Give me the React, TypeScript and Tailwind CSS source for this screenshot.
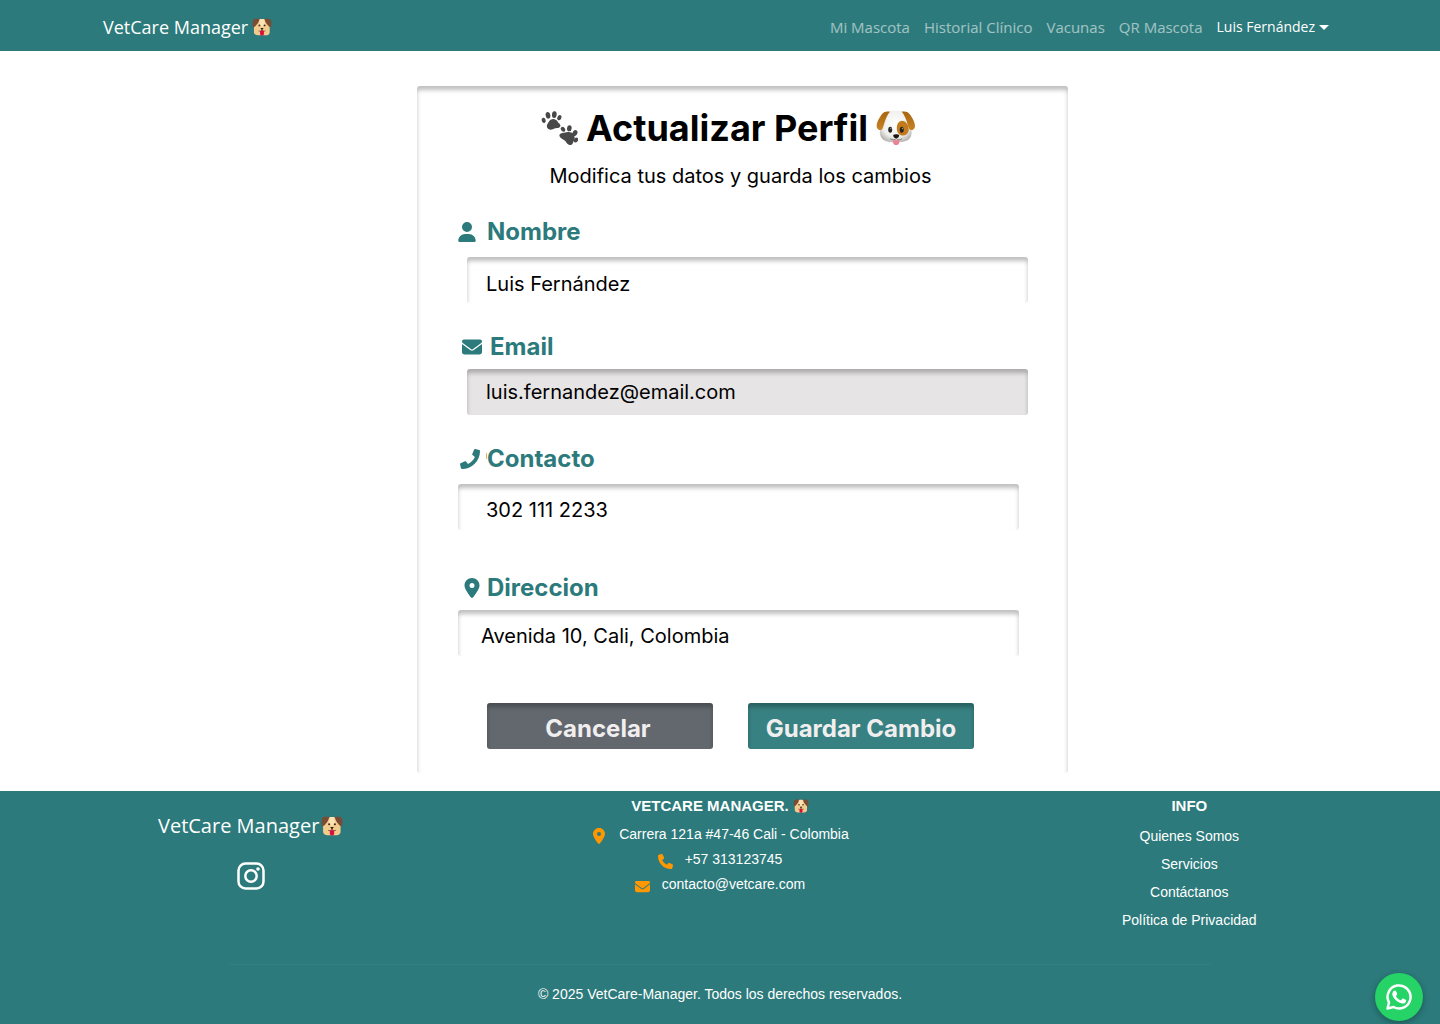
import React from "react";
import { FaUser, FaEnvelope, FaLocationDot, FaPhone } from "react-icons/fa6";
import { FaPhone as FaHandset } from "react-icons/fa";

function PuppyMark({ className }: { className: string }) {
  return (
    <svg viewBox="0 0 60 56" className={className} aria-hidden="true">
      <path d="M12 4h36l6 20v20c0 6-5 10-11 10H17C11 54 5 50 5 44V24z" fill="#f3cb8c" />
      <path d="M24 3h12l3 18-9 8-9-8z" fill="#fbe3b4" />
      <path d="M22 2H10C5 2 2 6 1 11v13c0 4 5 6 8 2 5-7 12-12 13-24z" fill="#7a4b35" />
      <path d="M38 2h12c5 0 8 4 9 9v13c0 4-5 6-8 2-5-7-12-12-13-24z" fill="#7a4b35" />
      <circle cx="22" cy="23" r="3" fill="#3b2a25" />
      <circle cx="38" cy="23" r="3" fill="#3b2a25" />
      <path d="M25 31h10l-4 6v4h-2v-4z" fill="#33221f" />
      <path d="M19 40c4 2 8 1 11-2 3 3 7 4 11 2" fill="none" stroke="#5a3a2c" strokeWidth="2" />
      <path d="M24 40h12v9a6 6 0 0 1-12 0z" fill="#d8103f" />
    </svg>
  );
}

function DogFace() {
  return (
    <svg viewBox="1034 92 121 107" className="h-9 w-10 shrink-0" aria-hidden="true">
      <defs>
        <radialGradient id="fur" cx="0.5" cy="0.4" r="0.62">
          <stop offset="0" stopColor="#ffffff" />
          <stop offset="0.7" stopColor="#eeeeec" />
          <stop offset="1" stopColor="#b9b6b2" />
        </radialGradient>
        <linearGradient id="ear" x1="0" y1="0" x2="0" y2="1">
          <stop offset="0" stopColor="#a8640f" />
          <stop offset="1" stopColor="#c98424" />
        </linearGradient>
      </defs>
      <path d="M1064 98c14-6 46-6 60 0 10 10 13 26 15 42 4 14 5 30-6 40-14 12-64 12-78 0-11-10-10-26-6-40 2-16 5-32 15-42z" fill="url(#fur)" />
      <path d="M1076 96c-12-2-20 1-26 10-6 9-14 22-14 34 0 9 9 14 15 11 8-8 7-32 25-55z" fill="url(#ear)" />
      <path d="M1112 96c12-2 20 1 26 10 6 9 14 22 14 34 0 9-9 14-15 11-8-8-7-32-25-55z" fill="url(#ear)" />
      <path d="M1110 124c12-1 22 10 23 24 1 12-7 20-17 20-12 0-19-8-19-22 0-12 5-21 13-22z" fill="#c17a1c" />
      <ellipse cx="1077" cy="151" rx="6" ry="9" fill="#282321" />
      <ellipse cx="1112" cy="151" rx="6" ry="9" fill="#282321" />
      <circle cx="1079" cy="147" r="2" fill="#999" />
      <circle cx="1114" cy="147" r="2" fill="#999" />
      <path d="M1086 167c4-3 14-3 18 0 1 6-5 10-9 10s-10-4-9-10z" fill="#171413" />
      <path d="M1077 178c7 5 14 4 18-1 4 5 11 6 18 1" fill="none" stroke="#55504d" strokeWidth="2" />
      <path d="M1086 182c6 1 12 1 18 0v7c0 11-18 11-18 0z" fill="#ee7f93" />
    </svg>
  );
}

function Paws() {
  return (
    <svg viewBox="34 84 111 105" className="h-[35px] w-[37px] shrink-0" fill="#484848" aria-hidden="true">
      <path d="M52 133c-2-7 2-11 5-16 4-8 14-11 21-7 6 3 6 7 10 11 7 6 5 13-3 14-6 0-9 0-14 3-7 4-16 3-19-5z" />
      <ellipse cx="42" cy="112" rx="6" ry="8" transform="rotate(-15 42 112)" />
      <ellipse cx="55" cy="97" rx="7" ry="10" transform="rotate(-10 55 97)" />
      <ellipse cx="74" cy="95" rx="7" ry="10" transform="rotate(5 74 95)" />
      <ellipse cx="89" cy="104" rx="6" ry="8" transform="rotate(30 89 104)" />
      <path d="M91 162c-4-6 0-11 7-12 7 0 10-3 17-3 13-1 21 8 20 19 0 6-4 8-5 13-2 8-11 9-16 4-5-4-5-8-10-11-5-4-10-5-13-10z" />
      <ellipse cx="100" cy="139" rx="6" ry="8" transform="rotate(-40 100 139)" />
      <ellipse cx="119" cy="136" rx="7" ry="9" transform="rotate(5 119 136)" />
      <ellipse cx="136" cy="150" rx="7" ry="9" transform="rotate(25 136 150)" />
      <ellipse cx="139" cy="171" rx="6" ry="8" transform="rotate(40 139 171)" />
    </svg>
  );
}

function WhatsAppGlyph() {
  return (
    <svg viewBox="0 0 28 28" className="size-7" aria-hidden="true">
      <path
        d="M4 19.500A11.500 11.500 0 1 1 8.500 24L2.500 25.500z"
        fill="none"
        stroke="currentColor"
        strokeWidth="2.500"
        strokeLinejoin="round"
      />
      <path
        d="M8.400 8.200c.8-.9 2.200-.9 2.700.1l1 2.300c.2.500 0 1-.9 2.100-.3.300-.2.600 0 .9 1 1.700 2.400 2.800 4.200 3.600.4.200.6.200.9-.2l1-1.200c.3-.4.600-.4 1-.2l2.300 1.100c.5.300.6.400.6.800 0 1.900-1.600 3.100-3.300 3.100-2 0-5.200-1.300-7.300-3.500-1.900-2-3.300-4-3.300-6 0-1.300.5-2.300 1.100-2.900z"
        fill="currentColor"
      />
    </svg>
  );
}

const inset = "shadow-[inset_0_4px_4px_rgba(0,0,0,0.25)]";

type FieldProps = {
  id: string;
  label: string;
  type?: string;
  value: string;
  icon: React.ReactNode;
  className: string;
  labelClass: string;
  inputClass: string;
  readOnly?: boolean;
};

function Field({ id, label, type = "text", value, icon, className, labelClass, inputClass, readOnly }: FieldProps) {
  return (
    <div className={`flex flex-col ${className}`}>
      <label htmlFor={id} className={`relative flex h-8 items-center text-2xl font-bold text-[#2c7a7b] ${labelClass}`}>
        {icon}
        {label}
      </label>
      <input
        id={id}
        type={type}
        defaultValue={value}
        readOnly={readOnly}
        className={`h-[46px] rounded-[3px] text-xl text-black outline-none ${inset} ${inputClass}`}
      />
    </div>
  );
}

export default function App() {
  return (
    <div className="flex min-h-screen flex-col bg-white font-['Inter',sans-serif] text-black">
      <header className="bg-[#2c7a7b] font-['Open_Sans',sans-serif]">
        <div className="mx-auto flex h-[51px] max-w-[1234px] items-center justify-between pt-[3px] pr-2">
          <a href="#" className="flex items-center gap-1 text-lg text-white">
            VetCare Manager
            <PuppyMark className="h-[18px] w-5" />
          </a>
          <nav className="flex items-center gap-[14px] text-[15px] text-white/55">
            <a href="#">Mi Mascota</a>
            <a href="#">Historial Clínico</a>
            <a href="#">Vacunas</a>
            <a href="#">QR Mascota</a>
            <button type="button" className="flex items-center gap-1 text-sm text-white">
              Luis Fernández
              <svg viewBox="0 0 10 5" className="h-[5px] w-[10px]" fill="currentColor" aria-hidden="true">
                <path d="M0 0h10L5 5z" />
              </svg>
            </button>
          </nav>
        </div>
      </header>

      <main className="flex justify-center pt-[35px] pb-[18px] pl-[45px]">
        <form
          className={`flex w-full max-w-[651px] flex-col rounded-[3px] pt-[18px] pb-6 pl-[41px] ${inset}`}
          onSubmit={(e) => e.preventDefault()}
        >
          <div className="flex h-12 items-center justify-center gap-2 pr-[69px]">
            <Paws />
            <h1 className="text-4xl font-bold">Actualizar Perfil</h1>
            <DogFace />
          </div>
          <p className="mt-[10px] pr-[45px] text-center text-xl">Modifica tus datos y guarda los cambios</p>

          <Field
            id="nombre"
            label="Nombre"
            value="Luis Fernández"
            icon={<FaUser className="h-5 w-[18px]" />}
            className="mt-[26px] mr-10 gap-[9px]"
            labelClass="gap-[11px]"
            inputClass="ml-[9px] px-[19px] pt-2"
          />
          <Field
            id="email"
            label="Email"
            type="email"
            value="luis.fernandez@email.com"
            readOnly
            icon={<FaEnvelope className="size-5" />}
            className="mt-7 mr-10 gap-[6px]"
            labelClass="gap-2 pl-1"
            inputClass="ml-[9px] bg-[#e7e4e5] px-[19px]"
          />
          <Field
            id="contacto"
            label="Contacto"
            type="tel"
            value="302 111 2233"
            icon={
              <>
                <FaHandset className="size-5" />
                <span className="absolute top-[10px] left-7 h-[6px] w-px bg-[#e0b469]" />
              </>
            }
            className="mt-7 mr-[49px] gap-[9px]"
            labelClass="gap-[7px] pl-[2px]"
            inputClass="px-7 pt-[6px]"
          />
          <Field
            id="direccion"
            label="Direccion"
            value="Avenida 10, Cali, Colombia"
            icon={<FaLocationDot className="h-5 w-4" />}
            className="mt-[42px] mr-[49px] gap-[6px]"
            labelClass="gap-[7px] pl-[6px]"
            inputClass="px-[23px] pt-[6px]"
          />

          <div className="mt-[47px] flex gap-[35px] pl-[29px] text-2xl font-bold text-[#f0eeee]">
            <button type="button" className={`h-[46px] w-[226px] rounded-[3px] bg-[#62686e] pt-[6px] pr-1 ${inset}`}>
              Cancelar
            </button>
            <button type="submit" className={`h-[46px] w-[226px] rounded-[3px] bg-[#388182] pt-[6px] ${inset}`}>
              Guardar Cambio
            </button>
          </div>
        </form>
      </main>

      <footer className="flex-1 bg-[#2c7a7b] font-['Liberation_Sans',Arial,sans-serif] text-sm text-white">
        <div className="grid h-[173px] grid-cols-3 px-4 text-center">
          <div className="flex flex-col items-center pt-[19px]">
            <a href="#" className="flex items-center gap-[2px] font-['Open_Sans',sans-serif] text-xl leading-8">
              VetCare Manager
              <PuppyMark className="h-5 w-[22px]" />
            </a>
            <a href="#" aria-label="Instagram" className="mt-5">
              <svg viewBox="0 0 28 28" className="size-7" fill="none" stroke="currentColor" strokeWidth="2.500" aria-hidden="true">
                <rect x="1.500" y="1.500" width="25" height="25" rx="7" />
                <circle cx="14" cy="14" r="5.700" />
                <circle cx="21" cy="7" r="1.800" fill="currentColor" stroke="none" />
              </svg>
            </a>
          </div>
          <div className="flex flex-col items-center pt-[5px]">
            <h2 className="flex items-center gap-1 text-[15px] leading-5 font-bold">
              VETCARE MANAGER.
              <PuppyMark className="h-[14px] w-4" />
            </h2>
            <address className="mt-2 flex flex-col items-center gap-[5px] leading-5 not-italic">
              <p className="flex items-center gap-3">
                <FaLocationDot className="mt-1 size-4 text-[#ff9800]" />
                Carrera 121a #47-46 Cali - Colombia
              </p>
              <p className="flex items-center gap-3">
                <FaPhone className="mt-1 size-[15px] text-[#ff9800]" />
                +57 313123745
              </p>
              <p className="flex items-center gap-3">
                <FaEnvelope className="mt-1 size-[15px] text-[#ff9800]" />
                contacto@vetcare.com
              </p>
            </address>
          </div>
          <div className="flex flex-col items-center pt-[5px]">
            <h2 className="text-[15px] leading-5 font-bold">INFO</h2>
            <ul className="mt-[10px] flex flex-col gap-2 leading-5">
              <li><a href="#">Quienes Somos</a></li>
              <li><a href="#">Servicios</a></li>
              <li><a href="#">Contáctanos</a></li>
              <li><a href="#">Política de Privacidad</a></li>
            </ul>
          </div>
        </div>
        <hr className="mx-auto max-w-[982px] border-[#327e80]" />
        <p className="pt-[19px] pb-5 text-center leading-5">© 2025 VetCare-Manager. Todos los derechos reservados.</p>
      </footer>

      <a
        href="#"
        aria-label="WhatsApp"
        className="fixed right-[17px] bottom-[3px] flex size-12 items-center justify-center rounded-full bg-[#25d366] text-white shadow-[0_2px_6px_rgba(0,0,0,0.3)]"
      >
        <WhatsAppGlyph />
      </a>
    </div>
  );
}
